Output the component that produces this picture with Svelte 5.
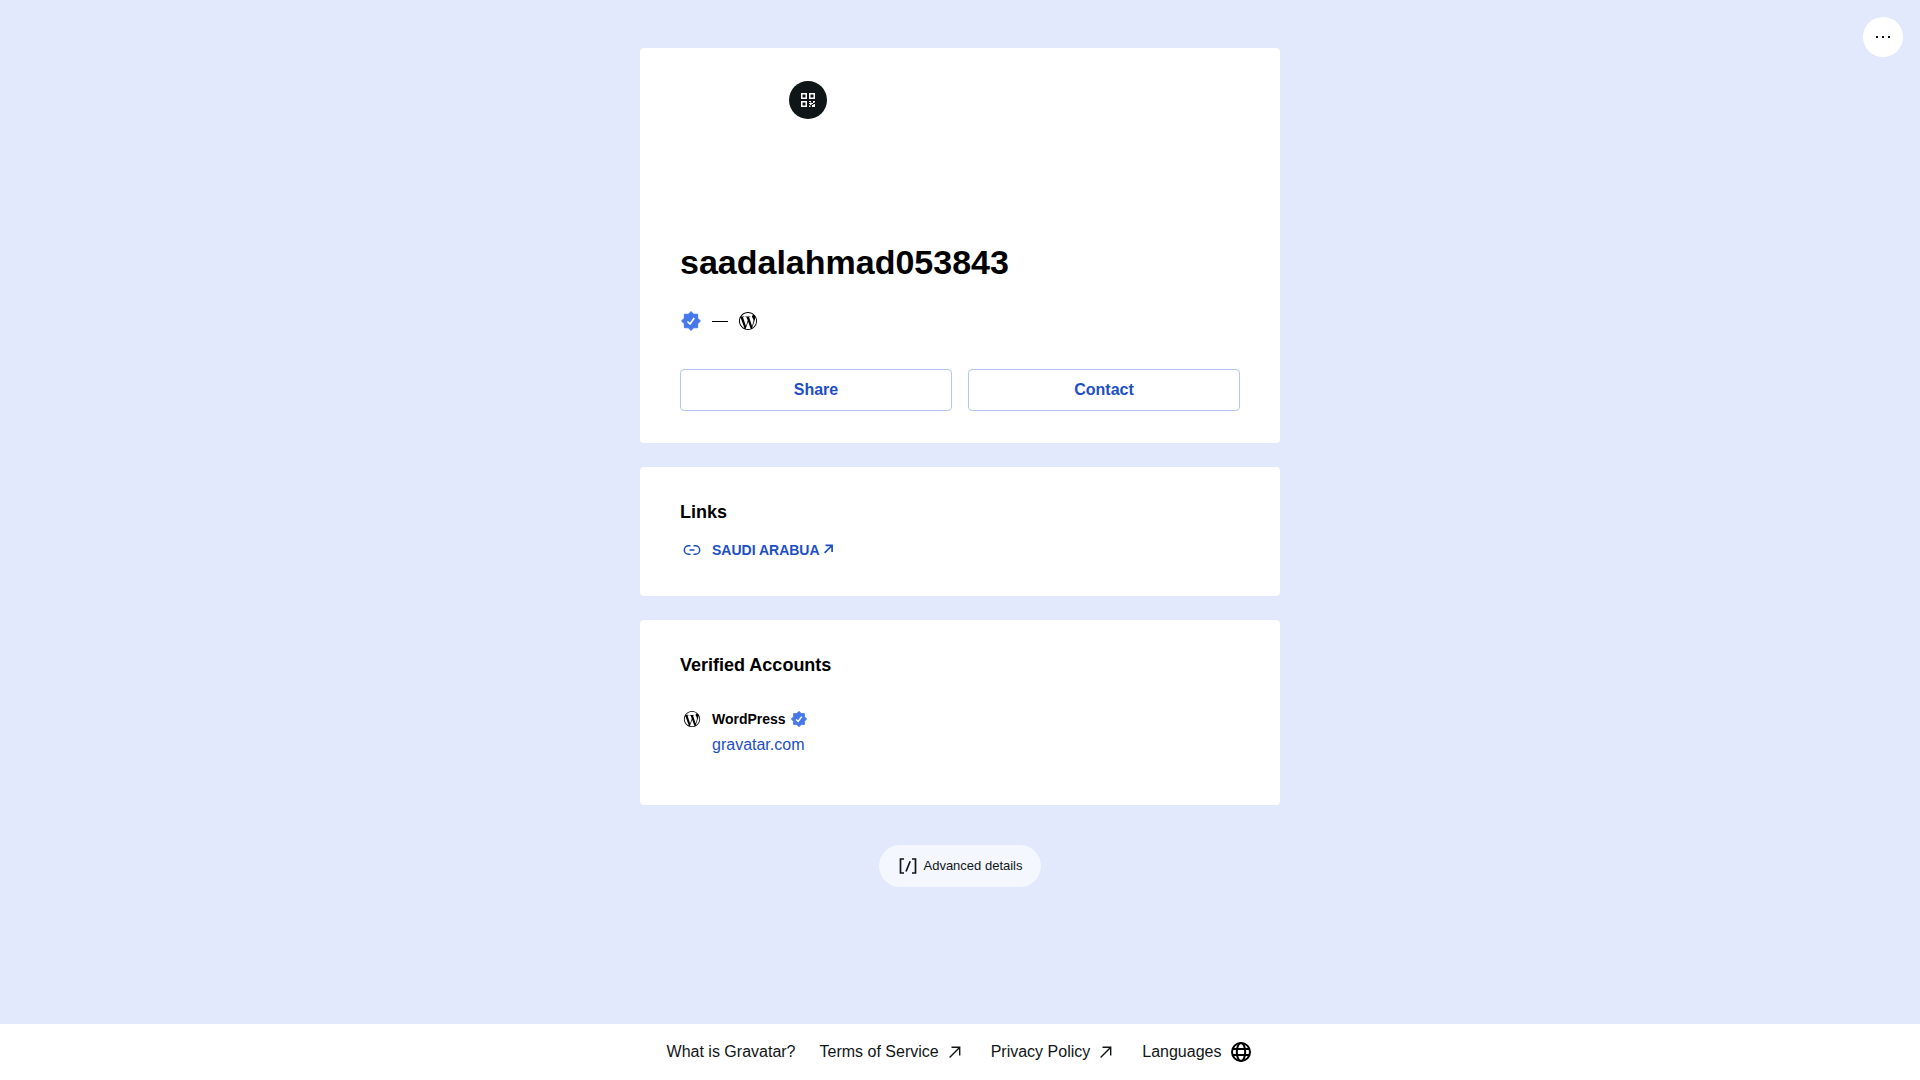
<script>
  const username = "saadalahmad053843";

  const links = [{ label: "SAUDI ARABUA", href: "#links" }];
  const accounts = [{ name: "WordPress", label: "gravatar.com", href: "#wordpress" }];

  const footerLinks = [
    { label: "What is Gravatar?", href: "#about", external: false },
    { label: "Terms of Service", href: "#terms", external: true },
    { label: "Privacy Policy", href: "#privacy", external: true },
  ];
</script>

{#snippet verified(size)}
  <svg width={size} height={size} viewBox="-1 -1 22 22" aria-hidden="true">
    <path fill="#4678eb" stroke="#4678eb" stroke-width="1" stroke-linejoin="round" d="M10 .6l2.7 2.7 3.9-.1.1 4L19.4 10l-2.7 2.8-.1 3.9-3.9.1L10 19.4l-2.7-2.6-3.9-.1-.1-3.9L.6 10l2.7-2.8.1-4 3.9.1z" />
    <path fill="none" stroke="#fff" stroke-width="1.7" d="M6.4 10.5l2.6 2.4 4.3-5.9" />
  </svg>
{/snippet}

{#snippet wordpress(size)}
  <svg width={size} height={size} viewBox="-1.300 -1.300 26.600 26.600" aria-hidden="true">
    <path d="M21.469 6.825c.84 1.537 1.318 3.3 1.318 5.175 0 3.979-2.156 7.456-5.363 9.325l3.295-9.527c.615-1.54.82-2.771.82-3.864 0-.405-.026-.78-.07-1.11m-7.981.105c.647-.03 1.232-.105 1.232-.105.582-.075.514-.93-.067-.899 0 0-1.755.135-2.88.135-1.064 0-2.85-.15-2.85-.15-.585-.03-.661.855-.075.885 0 0 .54.061 1.125.09l1.68 4.605-2.37 7.08L5.354 6.9c.649-.03 1.234-.1 1.234-.1.585-.075.516-.93-.065-.896 0 0-1.746.138-2.874.138-.2 0-.438-.008-.69-.015C4.911 3.15 8.235 1.215 12 1.215c2.809 0 5.365 1.072 7.286 2.833-.046-.003-.091-.009-.141-.009-1.06 0-1.812.923-1.812 1.914 0 .89.513 1.643 1.06 2.531.411.72.89 1.643.89 2.977 0 .915-.354 1.994-.821 3.479l-1.075 3.585-3.9-11.61.001.014zM12 22.784c-1.059 0-2.081-.153-3.048-.437l3.237-9.406 3.315 9.087c.024.053.05.101.078.149-1.12.393-2.325.609-3.582.609M1.211 12c0-1.564.336-3.05.935-4.39L7.29 21.709C3.694 19.96 1.212 16.271 1.211 12M12 0C5.385 0 0 5.385 0 12s5.385 12 12 12 12-5.385 12-12S18.615 0 12 0" />
  </svg>
{/snippet}

<div class="page">
  <button class="menu-button" aria-label="More options">
    <svg width="16" height="16" viewBox="0 0 16 16" aria-hidden="true">
      <path fill="#101517" d="M1 7h2v2H1zM7 7h2v2H7zM13 7h2v2h-2z" />
    </svg>
  </button>

  <main>
    <section class="card profile">
      <div class="avatar">
        <button class="qr-button" aria-label="Show QR code">
          <svg width="14" height="14" viewBox="0 0 14 14" aria-hidden="true">
            <path fill="#fff" fill-rule="evenodd" d="M0 0h6v6H0zM1.5 1.5v3h3v-3zM8 0h6v6H8zM9.5 1.5v3h3v-3zM0 8h6v6H0zM1.5 9.5v3h3v-3z" />
            <path fill="#fff" d="M8 8h2v1H8zM12 8h2v1.5h-1V10h-1zM9 9.5h1.5V10H12v1h-1.5v1H9v-1H8v-1h1zM8 12.5h1.5V14H8zM11 12h1.5v-1H14v3h-3z" />
          </svg>
        </button>
      </div>
      <h1>{username}</h1>
      <div class="badges">
        {@render verified(22)}
        <span class="dash"></span>
        {@render wordpress(20)}
      </div>
      <div class="actions">
        <button>Share</button>
        <button>Contact</button>
      </div>
    </section>

    <section class="card">
      <h2>Links</h2>
      <ul>
        {#each links as link}
          <li>
            <span class="icon">
              <svg width="24" height="24" viewBox="0 0 24 24" aria-hidden="true">
                <path fill="none" stroke="#1d4fc4" stroke-width="1.5" d="M10.5 7.7H8.6a4.3 4.3 0 0 0 0 8.6h1.9M13.5 7.7h1.9a4.3 4.3 0 0 1 0 8.6h-1.9M9.500 12h5" />
              </svg>
            </span>
            <a class="site" href={link.href}>
              {link.label}
              <svg width="9" height="12" viewBox="0 0 9 12" aria-hidden="true">
                <path fill="none" stroke="currentColor" stroke-width="1.7" d="M1.500 1.300h6.600v6.600M8 1.500L.6 8.900" />
              </svg>
            </a>
          </li>
        {/each}
      </ul>
    </section>

    <section class="card accounts">
      <h2>Verified Accounts</h2>
      <ul>
        {#each accounts as account}
          <li>
            <span class="icon">{@render wordpress(18)}</span>
            <div>
              <div class="account-name">
                {account.name}
                {@render verified(18)}
              </div>
              <a class="account-link" href={account.href}>{account.label}</a>
            </div>
          </li>
        {/each}
      </ul>
    </section>

    <button class="advanced">
      <svg width="20" height="20" viewBox="0 0 20 20" aria-hidden="true">
        <path fill="none" stroke="#101517" stroke-width="1.7" d="M7 3H3.500v14H7M15 3h3.500v14H15M13.200 5.300L9 15.500" />
      </svg>
      Advanced details
    </button>
  </main>

  <footer>
    {#each footerLinks as link}
      <a href={link.href}>
        {link.label}
        {#if link.external}
          <svg width="24" height="24" viewBox="0 0 24 24" aria-hidden="true">
            <path fill="none" stroke="#101517" stroke-width="1.4" d="M8.500 7.300h8.200v8.200M16.500 7.500L6.600 17.400" />
          </svg>
        {/if}
      </a>
    {/each}
    <button class="languages">
      Languages
      <svg width="24" height="24" viewBox="0 0 24 24" aria-hidden="true">
        <g fill="none" stroke="#000" stroke-width="2">
          <circle cx="12" cy="12" r="9" />
          <ellipse cx="12" cy="12" rx="4.2" ry="9" />
          <path d="M3.5 9h17M3.5 15h17" />
        </g>
      </svg>
    </button>
  </footer>
</div>

<style>
  :global(body) {
    background: #e3e9fc;
  }

  .page {
    display: flex;
    flex-direction: column;
    min-height: 100vh;
    color: #000;
    font-family: "Liberation Sans", Arial, sans-serif;
    font-size: 16px;
    line-height: 24px;
  }

  button {
    padding: 0;
    border: 0;
    background: none;
    color: inherit;
    font: inherit;
    cursor: pointer;
  }

  a {
    color: #1d4fc4;
    text-decoration: none;
  }

  svg {
    display: block;
    flex: none;
  }

  .menu-button {
    position: absolute;
    top: 17px;
    right: 17px;
    display: grid;
    place-items: center;
    width: 40px;
    height: 40px;
    border-radius: 50%;
    background: #fff;
  }

  main {
    display: flex;
    flex: 1;
    flex-direction: column;
    gap: 24px;
    box-sizing: border-box;
    width: 100%;
    max-width: 640px;
    margin: 0 auto;
    padding: 48px 0;
  }

  .card {
    padding: 32px 40px;
    border-radius: 4px;
    background: #fff;
  }

  .avatar {
    position: relative;
    width: 128px;
    height: 128px;
  }

  /* sits over the top right corner of the avatar */
  .qr-button {
    position: absolute;
    top: 1px;
    right: -19px;
    display: grid;
    place-items: center;
    width: 38px;
    height: 38px;
    border-radius: 50%;
    background: #101517;
  }

  h1 {
    margin: 32px 0 26px;
    font-size: 34px;
    line-height: 44px;
  }

  .badges {
    display: flex;
    align-items: center;
    gap: 10px;
    height: 22px;
  }

  .dash {
    width: 16px;
    height: 1px;
    background: #000;
  }

  .actions {
    display: grid;
    grid-template-columns: 1fr 1fr;
    gap: 16px;
    margin-top: 37px;
  }

  .actions button {
    height: 42px;
    border: 1px solid #b7c6ee;
    border-radius: 4px;
    color: #1d4fc4;
    font-weight: 700;
  }

  h2 {
    margin: 0;
    font-size: 18px;
    line-height: 27px;
  }

  ul {
    margin: 12px 0 0;
    padding: 0 0 2px;
    list-style: none;
  }

  li {
    display: flex;
    gap: 8px;
  }

  .icon {
    display: grid;
    place-items: center;
    flex: none;
    width: 24px;
    height: 24px;
  }

  .site,
  .account-name {
    display: flex;
    align-items: center;
    gap: 4px;
    font-size: 14px;
    font-weight: 700;
  }

  .accounts ul {
    margin-top: 28px;
    padding-bottom: 14px;
  }

  .account-link {
    display: block;
    line-height: 28px;
  }

  .advanced {
    display: flex;
    align-items: center;
    align-self: center;
    gap: 6px;
    height: 42px;
    margin-top: 16px;
    padding: 0 18px;
    border-radius: 21px;
    background: #f4f7fe;
    color: #101517;
    font-size: 13px;
  }

  footer {
    display: flex;
    align-items: center;
    justify-content: center;
    gap: 24px;
    height: 56px;
    background: #fff;
  }

  footer a,
  .languages {
    display: flex;
    align-items: center;
    gap: 4px;
    color: #101517;
  }

  .languages {
    gap: 8px;
  }
</style>
